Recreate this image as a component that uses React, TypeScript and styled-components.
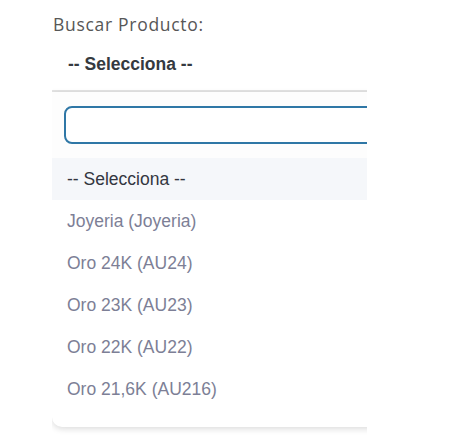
import { createGlobalStyle, styled } from "styled-components";

const options = [
  "Joyeria (Joyeria)",
  "Oro 24K (AU24)",
  "Oro 23K (AU23)",
  "Oro 22K (AU22)",
  "Oro 21,6K (AU216)",
];

const App = () => {
  return (
    <>
      <GlobalStyle />
      <Viewport>
        <Label>Buscar Producto:</Label>
        <SelectBox>
          <Selected>-- Selecciona --</Selected>
        </SelectBox>
        <Dropdown>
          <SearchArea>
            <SearchInput type="text" />
          </SearchArea>
          <OptionList>
            <Option $active>-- Selecciona --</Option>
            {options.map((o) => (
              <Option key={o}>{o}</Option>
            ))}
          </OptionList>
        </Dropdown>
      </Viewport>
    </>
  );
};

const GlobalStyle = createGlobalStyle`
  html, body {
    margin: 0;
    background: #ffffff;
  }
`;

const Viewport = styled.div`
  margin-left: 52px;
  width: 315px;
  overflow: hidden;
  padding-bottom: 10px;
`;

const Label = styled.div`
  font-family: "Open Sans", sans-serif;
  font-weight: 500;
  font-size: 17.5px;
  letter-spacing: 0.7px;
  color: #575757;
  width: 440px;
  padding: 14px 0 0 1px;
  line-height: 21px;
`;

const SelectBox = styled.div`
  width: 440px;
  height: 57px;
  border-bottom: 2px solid #e4e4e4;
  box-sizing: border-box;
  display: flex;
  align-items: center;
  padding: 4px 0 0 16px;
`;

const Selected = styled.span`
  font-family: "Liberation Sans", Arial, sans-serif;
  font-weight: bold;
  font-size: 17.5px;
  color: #353a40;
`;

const Dropdown = styled.div`
  width: 440px;
  background: #ffffff;
  border-radius: 0 0 10px 10px;
  box-shadow: 0 2px 6px rgba(0, 0, 0, 0.14);
  padding-bottom: 17px;
`;

const SearchArea = styled.div`
  padding: 14px 12px;
  background: #fdfdfd;
`;

const SearchInput = styled.input`
  display: block;
  width: 100%;
  height: 38px;
  box-sizing: border-box;
  border: 2px solid #2f77a6;
  border-radius: 8px;
  outline: none;
  background: #ffffff;
`;

const OptionList = styled.div`
  display: flex;
  flex-direction: column;
`;

const Option = styled.div<{ $active?: boolean }>`
  height: 42px;
  display: flex;
  align-items: center;
  padding-left: 15px;
  font-family: "Liberation Sans", Arial, sans-serif;
  font-size: 17.5px;
  color: ${(p) => (p.$active ? "#333640" : "#7d7f96")};
  background: ${(p) => (p.$active ? "#f5f7fa" : "transparent")};
`;

export default App;
